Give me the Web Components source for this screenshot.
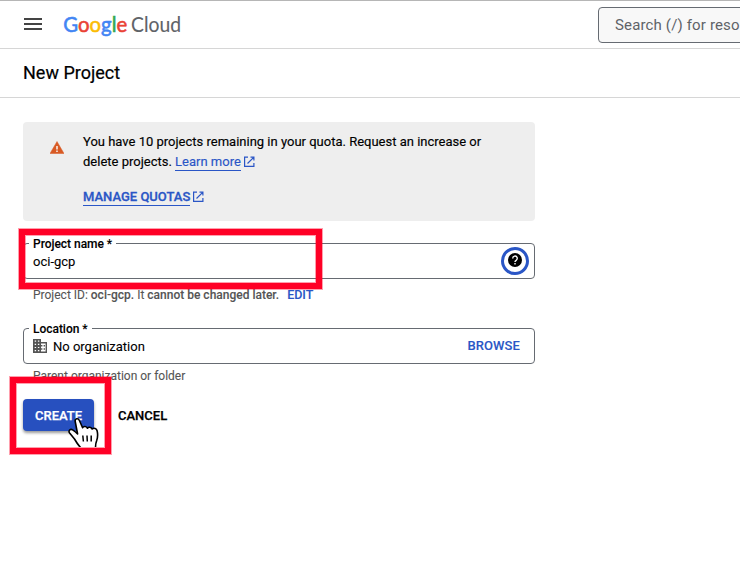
<!DOCTYPE html>
<html lang="en"><head><meta charset="utf-8"><title>New Project</title>
<style>html,body{margin:0;background:#fff;overflow:hidden}body{height:579px;font-family:Roboto,"Liberation Sans",sans-serif}</style></head>
<body><project-page></project-page>
<script>
const define = (name, html) => {
  const t = document.createElement('template');
  t.innerHTML = html;
  customElements.define(name, class extends HTMLElement {
    constructor() { super(); this.attachShadow({mode: 'open'}).append(t.content.cloneNode(true)); }
  });
};

define('cloud-logo', `<style>:host{display:block;width:120px;height:30px}svg{display:block;overflow:visible}</style>
<svg width="120" height="30" font-family="Lato, sans-serif" font-size="20.5">
<text x="-.7" y="20.5" textLength="64" lengthAdjust="spacingAndGlyphs" stroke-width=".55"><tspan fill="#4285f4" stroke="#4285f4">G</tspan><tspan fill="#ea4335" stroke="#ea4335">o</tspan><tspan fill="#fbbc05" stroke="#fbbc05">o</tspan><tspan fill="#4285f4" stroke="#4285f4">g</tspan><tspan fill="#34a853" stroke="#34a853">l</tspan><tspan fill="#ea4335" stroke="#ea4335">e</tspan></text>
<text x="67" y="20.5" textLength="50" lengthAdjust="spacingAndGlyphs" fill="#5f6368" stroke="#5f6368" stroke-width=".1">Cloud</text></svg>`);

define('app-header', `<style>:host{display:flex;box-sizing:border-box;height:49px;border-top:1px solid #b6b6b6;border-bottom:1px solid #d6d6d6;padding-left:24px}
.menu{width:18px;height:12px;margin-top:17px;flex:none}.menu i{display:block;height:2px;background:#444;margin-bottom:3px}
cloud-logo{margin:10px 0 0 22px;flex:none}
.search{box-sizing:border-box;flex:none;width:300px;height:36px;margin:6px 0 0 414px;border:1px solid #666b72;border-radius:4px;background:#f8f8f8;padding-left:16px;font-size:15px;line-height:34px;color:#5f6368;white-space:nowrap;letter-spacing:.15px}</style>
<div class="menu"><i></i><i></i><i></i></div><cloud-logo></cloud-logo><div class="search">Search (/) for resources, docs, products, and more</div>`);

define('page-title', `<style>:host{display:block;box-sizing:border-box;height:49px;border-bottom:1px solid #d6d6d6;padding-left:23px;font-size:18px;line-height:48px;color:#000;-webkit-text-stroke:.2px}</style><slot></slot>`);

define('open-link', `<style>:host{display:inline-flex;align-items:flex-start;color:#2a56c6;height:20px;vertical-align:top}span{line-height:20px;height:18px;border-bottom:1px solid #2a56c6}svg{margin:4px 0 0 2px}</style>
<span><slot></slot></span><svg width="12" height="12" fill="none" stroke="#2a56c6" stroke-width="1.2"><path d="M5 1.1H1.6v9.3h9.3V7M7.500 1.1h3.4V4.500M10.7 1.3L4.500 7.500"/></svg>`);

define('quota-notice', `<style>:host{display:flex;box-sizing:border-box;width:512px;height:99px;background:#eee;border-radius:4px;padding:10px 0 0 27px;font-size:13px;line-height:20px;color:#000;-webkit-text-stroke:.15px}
svg.w{flex:none;margin:9px 19px 0 0}p{margin:0 0 15px;height:40px;white-space:nowrap}open-link.q{font-weight:500;-webkit-text-stroke:.3px}</style>
<svg class="w" width="14" height="13"><path d="M7 .5L14 12.500H0Z" fill="#d85a24" stroke="#d85a24" stroke-width=".5"/><path d="M7 5v3.500M7 9.600v1.4" stroke="#fff" stroke-width="1.4"/></svg>
<div><p>You have 10 projects remaining in your quota. Request an increase or<br>delete projects. <open-link>Learn more</open-link></p><open-link class="q">MANAGE QUOTAS</open-link></div>`);

define('outlined-field', `<style>:host{display:flex;position:relative;box-sizing:border-box;width:512px;height:36px;border:1px solid #666b72;border-radius:4px;align-items:center;padding:1px 5px 0 9px;font-size:13px;color:#000;-webkit-text-stroke:.1px}
.label{position:absolute;left:5px;top:-7px;background:#fff;padding:0 4px;font-size:12px;line-height:15px;font-weight:500;letter-spacing:-.03px}.grow{flex:1}</style>
<span class="label"><slot name="label"></slot></span><slot></slot><span class="grow"></span><slot name="end"></slot>`);

define('help-button', `<style>:host{display:block;margin-top:-2px}svg{display:block}</style>
<svg width="28" height="28"><circle cx="14" cy="14" r="12.5" fill="#fff" stroke="#2a56c6" stroke-width="3"/><circle cx="14" cy="13" r="7" fill="#000"/><path d="M11.7 11.4a2.3 2.3 0 1 1 3.5 1.9c-.8.5-1.2.8-1.2 1.7M14 16v1.5" fill="none" stroke="#fff" stroke-width="1.4"/></svg>`);

define('org-icon', `<style>:host{display:block;margin:-2px 6px 0 0}svg{display:block}</style>
<svg width="14" height="14" viewBox="0 0 14 14"><path fill="#555" fill-rule="evenodd" d="M0 0h8v3h6v11H0ZM1.7 1.6v1.2h1.4V1.6ZM4.900 1.6v1.2h1.400V1.6ZM1.700 4.700v1.200h1.400V4.700ZM4.900 4.700v1.200h1.400V4.700ZM1.700 7.900v1.200h1.400V7.900ZM4.900 7.900v1.200h1.400V7.900ZM1.700 11v1.200h1.400V11ZM4.900 11v1.200h1.400V11ZM8 4.400V6h1.400v1.500H8v1.800h1.400v1.400H8v1.800h4.600V4.400ZM10.600 6h1.400v1.500h-1.400ZM10.600 9.300h1.400v1.400h-1.400Z"/></svg>`);

define('action-button', `<style>:host{display:block;box-sizing:border-box;height:32px;line-height:33px;font-size:13px;font-weight:500;color:#000;-webkit-text-stroke:.25px}
:host([primary]){width:71px;padding-left:12px;color:#fff;background:#2750bf;border-radius:4px;box-shadow:0 2px 3px #0006}</style><slot></slot>`);

define('highlight-frame', `<style>:host{position:absolute;box-sizing:border-box;border:6px solid #ff0026;box-shadow:0 0 0 1px #ff002660,inset 0 0 0 1px #ff002660}</style>`);

define('hand-pointer', `<style>:host{position:absolute;left:66px;top:417px;width:34px;height:30px;overflow:hidden}svg{display:block}</style>
<svg width="34" height="38" fill="#fff" stroke="#000" stroke-width="1.6" stroke-linejoin="round"><path d="M9.200 4.500C8.600 1.400 12.200.7 13.400 3.500l3.200 7.200c.8-1.700 4-1.500 4.800.5 1-1.500 4-1.200 4.700.8 1.800-1.400 4.400-.6 5 1.700.8 3.300.8 6.300-.4 9.800-.8 2-1.200 4-1.200 7v6H15v-5.500c-2.500-2.500-4.500-5.500-6.500-9L3.600 16c-1.600-2.400.8-4.600 3-3.200 2 1.300 3.400 2.500 5 4.200Z"/><path d="M16.800 18.500l.6 6M21 18.500l.3 6M25.200 18.500v6" fill="none" stroke-width="1.500"/></svg>`);

define('project-page', `<style>:host{display:block;position:relative;width:740px;height:579px;overflow:hidden;background:#fff}
main{padding:24px 0 0 23px}.f1{margin-top:22px}.f2{margin-top:25px}
.hint{padding-left:10px;font-size:12px;line-height:16px;color:#555;height:16px;margin-top:8px;white-space:nowrap;-webkit-text-stroke:.1px}.hint.p{margin-top:4px}b{font-weight:500}
.blue{color:#2a56c6;font-weight:500}.edit{margin-left:8px;font-size:12.5px}.browse{margin:-2px 9px 0 0;letter-spacing:.08px}.actions{display:flex;gap:24px;margin-top:15px}</style>
<app-header></app-header><page-title>New Project</page-title>
<main><quota-notice></quota-notice>
<outlined-field class="f1"><span slot="label">Project name *</span><span>oci-gcp</span><help-button slot="end"></help-button></outlined-field>
<div class="hint">Project ID: <b>oci-gcp.</b> It <b>cannot be changed later.</b><span class="blue edit">EDIT</span></div>
<outlined-field class="f2"><span slot="label">Location *</span><org-icon></org-icon><span>No organization</span><span slot="end" class="blue browse">BROWSE</span></outlined-field>
<div class="hint p">Parent organization or folder</div>
<div class="actions"><action-button primary>CREATE</action-button><action-button>CANCEL</action-button></div></main>
<highlight-frame style="left:19px;top:229px;width:303px;height:60px"></highlight-frame>
<highlight-frame style="left:10px;top:377px;width:101px;height:77px"></highlight-frame>
<hand-pointer></hand-pointer>`);
</script></body></html>
